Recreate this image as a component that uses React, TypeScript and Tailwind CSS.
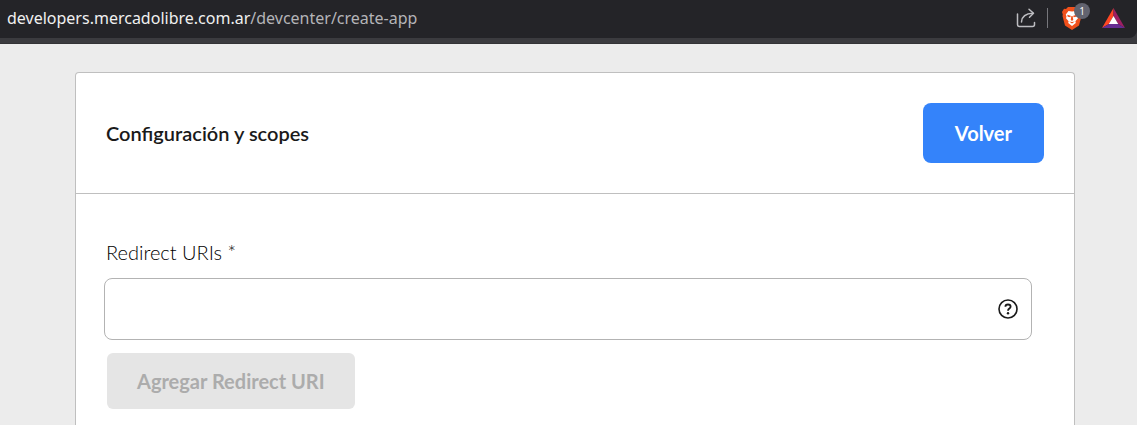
const ShareIcon = () => (
  <svg width="20" height="20" viewBox="0 0 20 20" fill="none" stroke="#bdbdc1" strokeWidth="1.5" strokeLinecap="round" strokeLinejoin="round">
    <path d="M1.5 6v10.5a2 2 0 0 0 2 2h13a2 2 0 0 0 2-2v-2" />
    <path d="M5.5 14c.3-5 3.5-8.5 11.5-8.7" />
    <path d="M13 1.2 17.5 5.3 13.5 9.3" />
  </svg>
);

const BraveIcon = () => (
  <svg width="20" height="23" viewBox="0 0 20 23">
    <path d="M6 0h8l2 2 2-.3L20 5l-.8 2.500.3 1.500-2.500 9.500L10 23l-7-4.500L.5 9l.3-1.500L0 5l2-3.300L4 2z" fill="#f1501b" />
    <path d="M6.500 4 10 4.600 13.500 4l2.700 3.600-.7 2 .5 1.600-2.600 3 .4 1.800-3.800 3-3.800-3 .4-1.800-2.600-3 .5-1.600-.7-2z" fill="#fff" />
    <path d="m5.200 7.800 3.600 1-.4 1.500-2.700-.6zM14.800 7.800l-3.600 1 .4 1.500 2.700-.6zM9.400 9h1.200l.7 3.800-1.300 1.200-1.300-1.200zM7.200 14.600l2.800.4 2.800-.4-2.800 1.900z" fill="#f1501b" />
  </svg>
);

const BatIcon = () => (
  <svg width="23" height="20" viewBox="0 0 23 20">
    <path d="M11.5 0 0 20l6.800-4 4.700-8z" fill="#ff4724" />
    <path d="M11.5 0 23 20l-6.800-4-4.700-8z" fill="#9e1f63" />
    <path d="M0 20h23l-6.800-4H6.800z" fill="#662d91" />
    <path d="m11.5 8 4.700 8H6.800z" fill="#fff" />
  </svg>
);

const HelpIcon = () => (
  <svg width="20" height="20" viewBox="0 0 20 20" fill="none" stroke="#1a1a1a" strokeWidth="1.6">
    <circle cx="10" cy="10" r="9" />
    <path d="M7.400 7.800C7.400 6.300 8.500 5.500 10 5.500s2.600.8 2.600 2.200c0 1.900-2.600 1.900-2.600 4" strokeWidth="1.8" />
    <circle cx="10" cy="14.200" r="1.200" fill="#1a1a1a" stroke="none" />
  </svg>
);

const AddressBar = () => (
  <header className="bg-[#3b3b3f] pb-[5px] border-b border-[#333336]">
    <div className="h-[38px] flex items-center justify-between bg-[#242428] rounded-br-lg pl-[7px] pr-3">
      <span className="font-['Noto_Sans',sans-serif] text-base text-[#b4b4b8] whitespace-nowrap pb-0.5">
        <span className="text-[#f0f0f0]">developers.mercadolibre.com.ar</span>
        /devcenter/create-app
      </span>
      <div className="flex items-center pb-0.5">
        <button aria-label="Compartir">
          <ShareIcon />
        </button>
        <span className="w-px h-5 bg-[#77777c] ml-[11px] mr-[14px]"></span>
        <button aria-label="Brave Shields" className="relative mr-5">
          <BraveIcon />
          <span className="absolute -top-1 left-3 size-4 rounded-full bg-[#62636f] text-white font-['Open_Sans',sans-serif] text-[10px] leading-4 text-center">
            1
          </span>
        </button>
        <button aria-label="Brave Rewards">
          <BatIcon />
        </button>
      </div>
    </div>
  </header>
);

const App = () => {
  return (
    <div className="min-h-screen flex flex-col bg-[#ececec] font-[Lato,sans-serif] text-[#1a1a1a]">
      <AddressBar />
      <main className="flex-1 flex flex-col pt-7 pl-[75px] pr-[62px]">
        <section className="flex-1 bg-white border border-b-0 border-[#bfbfbf] rounded-t">
          <div className="flex items-center justify-between px-[30px] py-[30px] border-b border-[#bfbfbf]">
            <h1 className="text-xl font-semibold">Configuración y scopes</h1>
            <button className="h-[60px] px-8 rounded-lg bg-[#3483fa] text-white text-xl font-bold">
              Volver
            </button>
          </div>
          <form className="pt-11 pb-4 pl-7 pr-[42px]">
            <label htmlFor="redirect" className="block pl-0.5 text-xl leading-7 font-light text-black">
              Redirect URIs *
            </label>
            <div className="flex items-center h-[62px] mt-3 pr-[13px] border border-[#b3b3b3] rounded-lg">
              <input id="redirect" type="text" className="flex-1 h-full px-4 text-xl outline-none" />
              <button type="button" aria-label="Ayuda">
                <HelpIcon />
              </button>
            </div>
            <button
              type="button"
              disabled
              className="h-14 mt-[13px] ml-[3px] px-[30px] rounded-md bg-[#e5e5e5] text-[#acacac] text-xl font-bold"
            >
              Agregar Redirect URI
            </button>
          </form>
        </section>
      </main>
    </div>
  );
};

export default App;
